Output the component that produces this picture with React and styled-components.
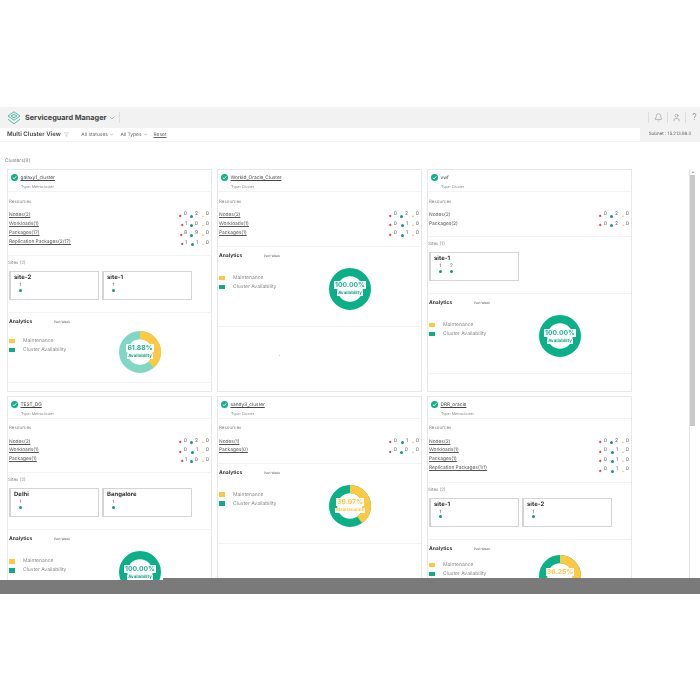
import styled, { createGlobalStyle } from "styled-components";
import { Bell, User, ChevronDown, Funnel } from "lucide-react";

const GREEN = "#0bb088";
const YELLOW = "#fdc842";

const clusters = [
  {
    name: "galaxy1_cluster",
    type: "Metrocluster",
    resources: [
      ["Nodes(2)", 0, 2, 0],
      ["Workloads(1)", 1, 0, 0],
      ["Packages(17)", 8, 9, 0],
      ["Replication Packages(2/17)", 1, 1, 0],
    ],
    sites: [
      { name: "site-2", nodes: [1] },
      { name: "site-1", nodes: [1] },
    ],
    donut: { value: 61.88, label: "Availability", soft: true },
    bodyTop: 3.5,
    analyticsHeight: 70,
  },
  {
    name: "Workld_Oracle_Cluster",
    type: "Cluster",
    resources: [
      ["Nodes(2)", 0, 2, 0],
      ["Workloads(1)", 0, 1, 0],
      ["Packages(1)", 0, 1, 0],
    ],
    donut: { value: 100, label: "Availability" },
    bodyTop: 7,
    analyticsHeight: 80,
    mark: true,
  },
  {
    name: "vwf",
    type: "Cluster",
    plain: true,
    resources: [
      ["Nodes(2)", 0, 2, 0],
      ["Packages(2)", 0, 2, 0],
    ],
    sites: [{ name: "site-1", nodes: [1, 2] }],
    donut: { value: 100, label: "Availability" },
    bodyTop: 7,
    analyticsHeight: 80,
  },
  {
    name: "TEST_DG",
    type: "Metrocluster",
    resources: [
      ["Nodes(2)", 0, 2, 0],
      ["Workloads(1)", 0, 1, 0],
      ["Packages(1)", 1, 0, 0],
    ],
    sites: [
      { name: "Delhi", nodes: [1] },
      { name: "Bangalore", nodes: [1] },
    ],
    donut: { value: 100, label: "Availability" },
    bodyTop: 7,
    analyticsHeight: 80,
  },
  {
    name: "sandy3_cluster",
    type: "Cluster",
    resources: [
      ["Nodes(1)", 0, 1, 0],
      ["Packages(0)", 0, 0, 0],
    ],
    donut: { value: 60.03, label: "Maintenance", warn: true, shown: "39.97%" },
    bodyTop: 7,
    analyticsHeight: 80,
  },
  {
    name: "DRR_oracle",
    type: "Metrocluster",
    resources: [
      ["Nodes(2)", 0, 2, 0],
      ["Workloads(1)", 0, 1, 0],
      ["Packages(1)", 0, 1, 0],
      ["Replication Packages(1/1)", 0, 1, 0],
    ],
    sites: [
      { name: "site-1", nodes: [1] },
      { name: "site-2", nodes: [1] },
    ],
    donut: { value: 63.75, label: "Maintenance", warn: true, shown: "36.25%" },
    bodyTop: 1,
    analyticsHeight: 70,
  },
];

function Logo() {
  return (
    <svg width="14" height="14" viewBox="0 0 14 14" fill="none" stroke="#3cb89c" strokeWidth="0.9">
      <path d="M7 0.8 L13 5 L7 9.2 L1 5 Z" />
      <path d="M7 3.4 L10 5 L7 6.8 L4 5 Z" />
      <path d="M1 8.2 L7 12.8 L13 8.2" />
    </svg>
  );
}

function StatusIcon() {
  return (
    <svg width="7" height="7" viewBox="0 0 14 14">
      <circle cx="7" cy="7" r="7" fill={GREEN} />
      <path d="M3.6 7.2 L6.2 9.6 L10.6 4.6" fill="none" stroke="#fff" strokeWidth="1.8" />
    </svg>
  );
}

function Donut({ value, label, soft, warn, shown }) {
  const r = 16.9;
  const length = 2 * Math.PI * r;
  const main = soft ? "#80d8c4" : GREEN;
  const yellowPart = ((100 - value) / 100) * length;
  return (
    <DonutBox>
      <svg width="42" height="42" viewBox="0 0 42 42">
        <circle cx="21" cy="21" r={r} fill="none" stroke={main} strokeWidth="8.2" />
        <circle
          cx="21"
          cy="21"
          r={r}
          fill="none"
          stroke={YELLOW}
          strokeWidth="8.2"
          strokeDasharray={`${yellowPart} ${length}`}
          transform="rotate(-90 21 21)"
        />
      </svg>
      <DonutText>
        <DonutValue warn={warn}>{shown || `${value.toFixed(2)}%`}</DonutValue>
        <DonutLabel warn={warn}>{label}</DonutLabel>
      </DonutText>
    </DonutBox>
  );
}

function ClusterCard({ cluster }) {
  return (
    <Card>
      <CardHeader>
        <TitleRow>
          <StatusIcon />
          <ClusterName plain={cluster.plain}>{cluster.name}</ClusterName>
        </TitleRow>
        <ClusterType>Type: {cluster.type}</ClusterType>
      </CardHeader>

      <Resources>
        <SectionLabel>Resources</SectionLabel>
        <ResourceBody>
          <ResourceNames>
            {cluster.resources.map(([name]) => (
              <ResourceName key={name} plain={cluster.plain}>
                {name}
              </ResourceName>
            ))}
          </ResourceNames>
          <ResourceCounts>
            {cluster.resources.map(([name, bad, ok, warn]) => (
              <CountRow key={name}>
                <Count>
                  <BadDot />
                  {bad}
                </Count>
                <Count>
                  <OkDot />
                  {ok}
                </Count>
                <Count>
                  <WarnDot />
                  {warn}
                </Count>
              </CountRow>
            ))}
          </ResourceCounts>
        </ResourceBody>
      </Resources>

      {cluster.sites && (
        <Sites>
          <SitesLabel>Sites ({cluster.sites.length})</SitesLabel>
          <SiteList>
            {cluster.sites.map((site) => (
              <SiteBox key={site.name}>
                <SiteName>{site.name}</SiteName>
                <SiteNodes>
                  {site.nodes.map((node) => (
                    <SiteNode key={node}>
                      {node}
                      <SiteDot />
                    </SiteNode>
                  ))}
                </SiteNodes>
              </SiteBox>
            ))}
          </SiteList>
        </Sites>
      )}

      <Analytics height={cluster.analyticsHeight}>
        <AnalyticsTitle>
          <strong>Analytics</strong>
          <span>Past Week</span>
        </AnalyticsTitle>
        <AnalyticsBody top={cluster.bodyTop}>
          <Legend>
            <LegendItem>
              <Swatch color={YELLOW} />
              Maintenance
            </LegendItem>
            <LegendItem>
              <Swatch color="#12a98a" />
              Cluster Availability
            </LegendItem>
          </Legend>
          <Donut {...cluster.donut} />
        </AnalyticsBody>
      </Analytics>
      {cluster.mark && <StrayMark>.</StrayMark>}
    </Card>
  );
}

export default function App() {
  return (
    <Page>
      <GlobalStyle />
      <TopBar>
        <Logo />
        <AppName>Serviceguard Manager</AppName>
        <ChevronDown size={8} strokeWidth={1.4} color="#666" />
        <TopDivider />
        <TopActions>
          <TopAction>
            <Bell size={9} strokeWidth={1.2} />
          </TopAction>
          <TopAction>
            <User size={9} strokeWidth={1.2} />
          </TopAction>
          <HelpAction>?</HelpAction>
        </TopActions>
      </TopBar>
      <SubBar>
        <ViewTitle>Multi Cluster View</ViewTitle>
        <Funnel size={5} strokeWidth={1.6} color="#999" />
        <Filter first>
          All statuses <ChevronDown size={5} strokeWidth={2} />
        </Filter>
        <Filter>
          All Types <ChevronDown size={5} strokeWidth={2} />
        </Filter>
        <ResetLink>Reset</ResetLink>
        <Subnet>Subnet : 15.213.96.0</Subnet>
      </SubBar>
      <Main>
        <ClustersLabel>Clusters(9)</ClustersLabel>
        <MainRow>
          <CardGrid>
            {clusters.map((cluster) => (
              <ClusterCard key={cluster.name} cluster={cluster} />
            ))}
          </CardGrid>
          <ScrollTrack>
            <ScrollArrow />
            <ScrollThumb />
          </ScrollTrack>
        </MainRow>
      </Main>
      <BottomBar />
    </Page>
  );
}

const GlobalStyle = createGlobalStyle`
  html, body {
    margin: 0;
    background: #fff;
    font-family: Inter, "Liberation Sans", sans-serif;
    color: #555;
    text-rendering: geometricPrecision;
  }
`;

const Page = styled.div`
  width: 700px;
  padding-top: 107px;
  filter: blur(0.3px);
`;

const TopBar = styled.div`
  height: 21px;
  background: #f2f2f2;
  display: flex;
  align-items: center;
  padding-left: 7px;
`;

const AppName = styled.div`
  margin: 0 2px 0 4px;
  font-size: 7.3px;
  font-weight: 700;
  color: #444;
`;

const TopDivider = styled.div`
  width: 1px;
  height: 11px;
  margin-left: 3px;
  background: #ddd;
`;

const TopActions = styled.div`
  margin-left: auto;
  display: grid;
  grid-template-columns: 19px 18px 15px;
`;

const TopAction = styled.div`
  height: 11px;
  border-left: 1px solid #ddd;
  display: flex;
  align-items: center;
  justify-content: center;
  color: #777;
`;

const HelpAction = styled(TopAction)`
  padding-left: 3px;
  font-size: 9px;
  font-weight: 300;
  color: #888;
`;

const SubBar = styled.div`
  height: 14px;
  display: flex;
  align-items: center;
  padding-left: 7px;
  border-bottom: 1px solid #f1f1f1;
  box-sizing: border-box;
  font-size: 4.9px;
  color: #666;
`;

const ViewTitle = styled.div`
  margin-right: 3px;
  font-size: 6.1px;
  font-weight: 600;
  color: #444;
`;

const Filter = styled.div`
  display: flex;
  align-items: center;
  gap: 1px;
  margin-left: ${(props) => (props.first ? "12.5px" : "6.5px")};
`;

const ResetLink = styled.a`
  margin-left: 6px;
  text-decoration: underline;
  text-decoration-thickness: 0.4px;
`;

const Subnet = styled.div`
  margin-left: auto;
  width: 60px;
  height: 14px;
  background: #f2f2f2;
  display: flex;
  align-items: center;
  justify-content: center;
  font-size: 4.5px;
`;

const Main = styled.div`
  height: 438px;
  overflow: hidden;
`;

const ClustersLabel = styled.div`
  padding: 17px 0 0 5px;
  height: 10px;
  line-height: 5px;
  font-size: 4.8px;
  color: #777;
`;

const MainRow = styled.div`
  display: flex;
`;

const CardGrid = styled.div`
  display: grid;
  grid-template-columns: repeat(3, 205px);
  grid-auto-rows: 223px;
  column-gap: 5px;
  row-gap: 3.5px;
  margin-left: 7px;
  width: 682px;
`;

const ScrollTrack = styled.div`
  width: 6px;
  height: 420px;
  box-sizing: border-box;
  background: #fff;
  border-left: 1px solid #e4e4e4;
`;

const ScrollArrow = styled.div`
  width: 0;
  height: 0;
  margin: 2px auto 1.5px;
  border-left: 1.5px solid transparent;
  border-right: 1.5px solid transparent;
  border-bottom: 2px solid #888;
`;

const ScrollThumb = styled.div`
  height: 251px;
  background: #c9c9c9;
`;

const BottomBar = styled.div`
  position: relative;
  height: 14px;
  background: #7a7a7a;
  &::before {
    content: "";
    position: absolute;
    top: -2px;
    left: 163px;
    right: 0;
    height: 2px;
    background: #7a7a7a;
  }
`;

const Card = styled.div`
  border: 1px solid #e8e8e8;
  box-sizing: border-box;
  overflow: hidden;
`;

const CardHeader = styled.div`
  height: 22px;
  border-bottom: 1px solid #f3f3f3;
  padding: 4px 0 0 3px;
  margin-bottom: -4px;
  box-sizing: border-box;
`;

const TitleRow = styled.div`
  display: flex;
  align-items: center;
  gap: 2.5px;
  height: 7px;
`;

const ClusterName = styled.span`
  padding-top: 1px;
  font-size: 4.8px;
  color: #444;
  text-decoration: ${(props) => (props.plain ? "none" : "underline")};
  text-decoration-thickness: 0.4px;
`;

const ClusterType = styled.div`
  margin: 3px 0 0 10px;
  font-size: 3.7px;
  color: #888;
`;

const Resources = styled.div`
  padding: 11px 2px 0 1px;
  border-bottom: 1px solid #f3f3f3;
`;

const SectionLabel = styled.div`
  padding-top: 0.5px;
  font-size: 4.5px;
  line-height: 5.5px;
  color: #888;
`;

const ResourceBody = styled.div`
  display: flex;
  justify-content: space-between;
  margin-top: 6px;
  padding-bottom: 6px;
`;

const ResourceNames = styled.div`
  display: flex;
  flex-direction: column;
`;

const ResourceName = styled.a`
  font-size: 4.85px;
  line-height: 8.9px;
  color: #555;
  text-decoration: ${(props) => (props.plain ? "none" : "underline")};
  text-decoration-thickness: 0.4px;
`;

const ResourceCounts = styled.div`
  display: flex;
  flex-direction: column;
`;

const CountRow = styled.div`
  display: flex;
  height: 9.6px;
`;

const Count = styled.div`
  width: 11px;
  display: flex;
  justify-content: flex-end;
  gap: 2px;
  font-size: 5px;
  line-height: 6px;
  color: #666;
`;

const BadDot = styled.i`
  width: 2.4px;
  height: 2.4px;
  margin-top: 3.5px;
  background: #c9474f;
  transform: rotate(45deg);
`;

const OkDot = styled.i`
  display: block;
  width: 3px;
  height: 3px;
  margin-top: 3.5px;
  border-radius: 50%;
  background: #12997f;
`;

const WarnDot = styled.i`
  width: 0;
  height: 0;
  margin-top: 3.5px;
  border-left: 1.5px solid transparent;
  border-right: 1.5px solid transparent;
  border-bottom: 2.6px solid #fbc560;
`;

const Sites = styled.div`
  height: 57px;
  box-sizing: border-box;
  padding: 5px 0 0 0;
  border-bottom: 1px solid #f3f3f3;
`;

const SitesLabel = styled.div`
  font-size: 4.5px;
  line-height: 6px;
  color: #888;
`;

const SiteList = styled.div`
  display: flex;
  gap: 3px;
  margin: 4px 0 0 1px;
`;

const SiteBox = styled.div`
  width: 90px;
  height: 29px;
  box-sizing: border-box;
  padding: 2px 3px;
  border: 1px solid #d4d4d4;
  border-left-width: 2px;
`;

const SiteName = styled.div`
  font-size: 6px;
  line-height: 8px;
  font-weight: 700;
  color: #333;
`;

const SiteNodes = styled.div`
  display: flex;
  gap: 8px;
  margin: 1px 0 0 5px;
`;

const SiteNode = styled.div`
  width: 3px;
  display: flex;
  flex-direction: column;
  align-items: center;
  font-size: 4.6px;
  line-height: 5px;
  color: #555;
`;

const SiteDot = styled(OkDot)`
  margin-top: 0.5px;
`;

const Analytics = styled.div`
  height: ${(props) => props.height}px;
  box-sizing: border-box;
  padding: 6px 0 0 1px;
  border-bottom: 1px solid #f3f3f3;
`;

const AnalyticsTitle = styled.div`
  display: flex;
  align-items: center;
  height: 6px;
  font-size: 3.2px;
  color: #555;
  strong {
    width: 45px;
    font-size: 5px;
    font-weight: 700;
    color: #333;
  }
`;

const AnalyticsBody = styled.div`
  display: flex;
  margin-top: ${(props) => props.top}px;
`;

const Legend = styled.div`
  width: 110px;
  padding-top: 7.5px;
`;

const LegendItem = styled.div`
  display: flex;
  align-items: center;
  height: 9px;
  font-size: 5px;
  color: #888;
`;

const Swatch = styled.i`
  width: 6px;
  height: 4.5px;
  margin-right: 8px;
  background: ${(props) => props.color};
`;

const DonutBox = styled.div`
  position: relative;
  width: 42px;
  height: 42px;
  margin-top: 2px;
`;

const DonutText = styled.div`
  position: absolute;
  inset: 0;
  display: flex;
  flex-direction: column;
  align-items: center;
  justify-content: center;
  gap: 2px;
`;

const DonutValue = styled.span`
  padding: 0 1px;
  font-size: 6.8px;
  line-height: 8px;
  font-weight: 700;
  background: #fff;
  color: ${(props) => (props.warn ? YELLOW : "#1eb394")};
`;

const DonutLabel = styled.span`
  padding: 0 1px;
  font-size: 4.4px;
  line-height: 5px;
  font-weight: 700;
  background: #fff;
  color: ${(props) => (props.warn ? YELLOW : "#0fa685")};
`;

const StrayMark = styled.div`
  padding: 25px 0 0 61px;
  font-size: 5px;
  line-height: 6px;
  color: #555;
`;
